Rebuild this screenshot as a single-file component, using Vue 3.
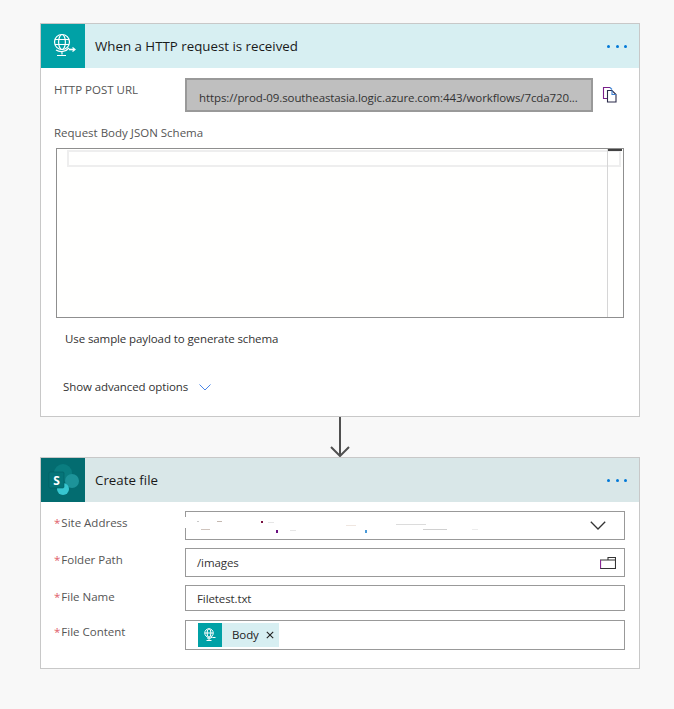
<script setup>
const fields = [
  { label: 'Folder Path', value: '/images', cls: 'f-folder', folder: true },
  { label: 'File Name', value: 'Filetest.txt', cls: 'f-name' },
]
const specks = [
  [11, 9, 2, 1, '#c9c9c9'], [31, 9, 5, 1, '#c4b8b0'], [75, 9, 2, 2, '#7a1040'], [82, 10, 6, 1, '#e6e6e6'],
  [15, 17, 9, 1, '#cfc4bd'], [90, 18, 2, 3, '#6a0f80'], [104, 18, 6, 1, '#e6e6e6'],
  [160, 13, 10, 1, '#efe6e0'], [210, 12, 30, 1, '#dcdcdc'], [237, 17, 24, 1, '#d0d0d0'], [286, 17, 6, 1, '#ececec'],
  [179, 18, 2, 3, '#4a9ad8'],
]
</script>

<template>
  <main class="page">
    <section class="card">
      <header class="head head-http">
        <div class="logo logo-http">
          <svg width="32" height="32" viewBox="0 0 32 32" fill="none" stroke="#fff" stroke-width="1.2">
            <circle cx="15" cy="12" r="7.5" />
            <ellipse cx="15" cy="12" rx="3.4" ry="7.5" />
            <path d="M8 9.5h14M8 14.500h14" />
            <path d="M22 18a10 10 0 0 1-13 2M15 21.500v3M10 25.500h9" />
            <path d="M22 19.500h5" stroke-width="1.6" />
            <path d="M25.500 17.500l2.500 2-2.500 2" />
          </svg>
        </div>
        <h2 class="title">When a HTTP request is received</h2>
        <div class="dots"><i></i><i></i><i></i></div>
      </header>
      <div class="body-http">
        <div class="url-row">
          <span class="label url-label">HTTP POST URL</span>
          <div class="url">https://prod-09.southeastasia.logic.azure.com:443/workflows/7cda720...</div>
          <svg class="copy" width="16" height="17" viewBox="0 0 16 17" fill="none" stroke-width="1.1">
            <path d="M8 1.500H1.500v11H5" stroke="#7a1f8a" />
            <path d="M8 1.500 10 3.500" stroke="#3d7fd0" />
            <path d="M5.500 4.500h4.500l4 4v7.500H5.500z" stroke="#2b2b4a" />
            <path d="M10 4.500V8.500h4" stroke="#3d7fd0" />
          </svg>
        </div>
        <div class="label schema-label">Request Body JSON Schema</div>
        <div class="editor">
          <div class="current-line"></div>
          <div class="scroll"></div>
          <div class="thumb"></div>
        </div>
        <div class="sample">Use sample payload to generate schema</div>
        <div class="advanced">
          <span>Show advanced options</span>
          <svg width="12" height="7" viewBox="0 0 12 7" fill="none" stroke="#4a86e8" stroke-width="1"><path d="M.5.500 6 6 11.500.500" /></svg>
        </div>
      </div>
    </section>

    <div class="connector">
      <svg width="22" height="40" viewBox="0 0 22 40" fill="none" stroke="#505050" stroke-width="2"><path d="M11 0v38M2 30l9 9 9-9" /></svg>
    </div>

    <section class="card">
      <header class="head head-sp">
        <div class="logo logo-sp">
          <svg width="34" height="34" viewBox="0 0 34 34">
            <circle cx="17" cy="10" r="9" fill="#0a7d80" />
            <circle cx="26" cy="18" r="7" fill="#1d9399" />
            <circle cx="17" cy="26" r="6" fill="#37c6d0" />
            <rect x="3" y="9" width="15" height="16" rx="1.200" fill="#057478" stroke="#025e62" stroke-width=".6" />
            <text x="10.500" y="21.500" text-anchor="middle" class="sp-s">S</text>
          </svg>
        </div>
        <h2 class="title">Create file</h2>
        <div class="dots"><i></i><i></i><i></i></div>
      </header>
      <div class="body-sp">
        <div class="row">
          <span class="label req"><b>*</b>Site Address</span>
          <div class="box f-site">
            <span class="border-gap"></span>
            <svg class="specks" width="320" height="28" viewBox="0 0 320 28">
              <rect v-for="(s, i) in specks" :key="i" :x="s[0]" :y="s[1]" :width="s[2]" :height="s[3]" :fill="s[4]" />
            </svg>
            <svg width="16" height="9" viewBox="0 0 16 9" fill="none" stroke="#333" stroke-width="1.3"><path d="M.8.8 8 8 15.200.8" /></svg>
          </div>
        </div>
        <div v-for="f in fields" :key="f.label" class="row">
          <span class="label req"><b>*</b>{{ f.label }}</span>
          <div class="box" :class="f.cls">
            <span>{{ f.value }}</span>
            <svg v-if="f.folder" width="16" height="13" viewBox="0 0 16 13" fill="none" stroke-width="1.1">
              <path d="M.5 4h15v8.500H.5z" stroke="#333" />
              <path d="M.5 4v8.500" stroke="#8a2a96" />
              <path d="M8 4V1.500h7.500V4" stroke="#333" />
            </svg>
          </div>
        </div>
        <div class="row row-content">
          <span class="label req"><b>*</b>File Content</span>
          <div class="box f-content">
            <div class="token">
              <div class="token-icon">
                <svg width="16" height="16" viewBox="0 0 32 32" fill="none" stroke="#fff" stroke-width="2">
                  <circle cx="14" cy="12" r="8.500" />
                  <ellipse cx="14" cy="12" rx="3.800" ry="8.500" />
                  <path d="M5.800 12h16.400M21 20a10 10 0 0 1-11 2M14 23v3M9 27h10M21 21h6" />
                </svg>
              </div>
              <span class="token-text">Body</span>
              <svg width="8" height="8" viewBox="0 0 8 8" stroke="#222" stroke-width="1.100"><path d="M.8.8l6.400 6.400M7.200.8.8 7.200" /></svg>
            </div>
          </div>
        </div>
      </div>
    </section>
  </main>
</template>

<style>
html, body { margin: 0; background: #f8f8f8; }
</style>

<style scoped>
.page {
  box-sizing: border-box;
  width: 674px;
  height: 709px;
  padding: 23px 34px 0 40px;
  background: #f8f8f8;
  font-family: "Open Sans", "Noto Sans", sans-serif;
  font-size: 11.5px;
  letter-spacing: -0.1px;
  color: #333;
  overflow: hidden;
}
.card {
  width: 600px;
  box-sizing: border-box;
  background: #fff;
  border: 1px solid #c8c8c8;
}
.head {
  display: flex;
  align-items: center;
  height: 44px;
}
.head-http { background: #d7eff2; }
.head-sp { background: #d9e7e8; }
.logo {
  width: 44px;
  height: 44px;
  flex: none;
  display: flex;
  align-items: center;
  justify-content: center;
}
.logo-http { background: #00a1a6; }
.logo-sp { background: #036c70; }
.sp-s { fill: #fff; font: 700 12px "Open Sans", sans-serif; }
.title {
  margin: 0 0 0 10px;
  flex: 1;
  font-size: 13.3px;
  letter-spacing: 0;
  font-weight: 400;
  color: #1a1a1a;
}
.dots {
  display: flex;
  gap: 5.5px;
  margin-right: 12px;
}
.dots i {
  width: 3px;
  height: 3px;
  border-radius: 50%;
  background: #0078d7;
}
.label { color: #555; line-height: 16px; letter-spacing: 0; }
.body-http { height: 348px; }
.url-row {
  display: flex;
  padding: 10px 0 0 13px;
  align-items: flex-start;
}
.url-label { width: 131px; padding-top: 4px; }
.url {
  box-sizing: border-box;
  width: 408px;
  height: 34px;
  padding-left: 12px;
  line-height: 35px;
  background: #bfbfbf;
  border: 2px solid #999;
  color: #333;
  white-space: nowrap;
}
.copy { margin: 8px 0 0 9px; }
.schema-label { margin: 13px 0 0 13px; }
.editor {
  position: relative;
  box-sizing: border-box;
  margin: 7px 0 0 15px;
  width: 568px;
  height: 170px;
  border: 1px solid #8f8f8f;
  background: #fffffe;
}
.current-line {
  position: absolute;
  left: 10px;
  top: 1px;
  width: 554px;
  height: 17px;
  box-sizing: border-box;
  border: 2px solid #eeeeee;
}
.scroll {
  position: absolute;
  left: 550px;
  top: 0;
  bottom: 0;
  width: 1px;
  background: #d6d6d6;
}
.thumb {
  position: absolute;
  left: 551px;
  top: 0;
  width: 14px;
  height: 2px;
  background: #424242;
}
.sample { margin: 13px 0 0 24px; line-height: 16px; }
.advanced {
  display: flex;
  align-items: center;
  gap: 11px;
  margin: 32px 0 0 22px;
  line-height: 16px;
}
.body-sp {
  display: flex;
  flex-direction: column;
  padding: 9px 14px 18px 13px;
}
.row { display: flex; align-items: flex-start; margin-bottom: 8px; }
.row:nth-last-child(2) { margin-bottom: 9px; }
.row:last-child { margin-bottom: 0; }
.req { width: 131px; flex: none; padding-top: 4px; }
.req b { color: #e0606a; font-weight: 400; margin-right: 1px; }
.box {
  box-sizing: border-box;
  width: 440px;
  display: flex;
  align-items: center;
  justify-content: space-between;
  padding: 0 8px 0 10px;
  border: 1px solid #999;
  color: #333;
}
.f-site { height: 29px; position: relative; padding-right: 18px; justify-content: flex-end; }
.f-folder { height: 29px; padding-left: 11px; }
.f-name { height: 26px; padding-left: 11px; }
.f-content { height: 30px; padding: 0 0 0 12px; justify-content: flex-start; }
.border-gap {
  position: absolute;
  left: -1px;
  top: 5px;
  width: 1px;
  height: 11px;
  background: #fff;
}
.specks { position: absolute; left: 0; top: 0; }
.token {
  display: flex;
  align-items: center;
  height: 24px;
  background: #d7eff2;
  padding-right: 5px;
}
.token-icon {
  width: 24px;
  height: 24px;
  background: #00a1a6;
  display: flex;
  align-items: center;
  justify-content: center;
}
.token-text { margin: -2px 7px 0 10px; color: #222; }
.connector { height: 40px; margin-left: 289px; }
</style>
